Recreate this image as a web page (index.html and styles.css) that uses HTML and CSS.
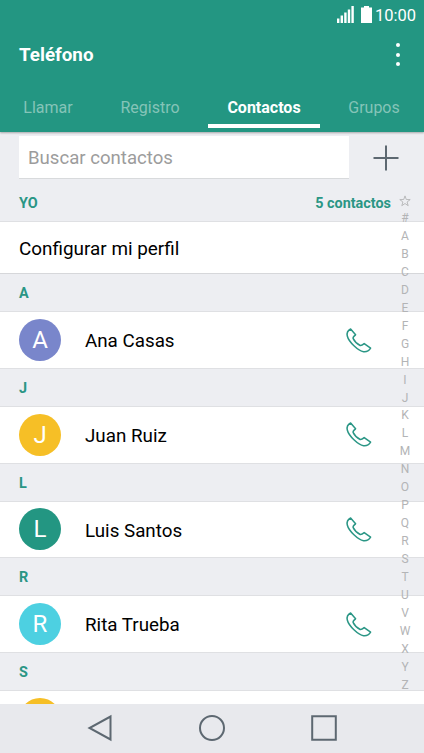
FILE: index.html
```html
<!DOCTYPE html>
<html lang="es">
<head>
  <meta charset="UTF-8">
  <meta name="viewport" content="width=device-width, initial-scale=1.0">
  <title>Teléfono</title>
  <link rel="stylesheet" href="styles.css">
</head>
<body>
  <!-- Shared icons -->
  <svg class="sprite">
    <symbol id="icon-phone" viewBox="0 0 28 28">
      <path d="M5.6 2 L10.6 7.8 Q7.4 10 8.2 11.6 C9.4 14.2 12.4 17 15.2 18.5 Q16.6 18.8 19.2 16.6 L25.6 21.2 C24 23.8 21.6 25 18.6 24.7 C13.2 24 3.7 14.8 2.3 9 C1.6 6 3 3.4 5.6 2 Z"/>
    </symbol>
  </svg>

  <!-- Header -->
  <header class="header">
    <div class="status-bar">
      <svg class="signal" viewBox="0 0 17 17" width="17" height="17">
        <path d="M0 12.5h2.4V17H0zM3.6 9.5H6V17H3.6zM7.2 6.5h2.4V17H7.2zM10.8 3.5h2.4V17h-2.4zM14.4 0h2.4v17h-2.4z"/>
      </svg>
      <svg class="battery" viewBox="0 0 11 17" width="11" height="17">
        <path d="M3 0h5v1.5h3V17H0V1.5h3z"/>
      </svg>
      <span>10:00</span>
    </div>
    <div class="title-bar">
      <h1>Teléfono</h1>
      <div class="more"><i></i><i></i><i></i></div>
    </div>
    <nav class="tabs">
      <a class="tab">Llamar</a>
      <a class="tab">Registro</a>
      <a class="tab active">Contactos</a>
      <a class="tab">Grupos</a>
    </nav>
  </header>

  <!-- Contact list -->
  <main class="content">
    <div class="search">
      <input class="search-input" type="text" placeholder="Buscar contactos">
      <svg class="add" viewBox="0 0 26 26" width="26" height="26">
        <path d="M13 0.5v25M0.5 13h25"/>
      </svg>
    </div>

    <div class="section me"><span>YO</span><span>5 contactos</span></div>
    <div class="profile">Configurar mi perfil</div>

    <div class="section">A</div>
    <div class="contact">
      <span class="avatar purple">A</span>
      <span class="name">Ana Casas</span>
      <svg class="phone"><use href="#icon-phone"/></svg>
    </div>

    <div class="section">J</div>
    <div class="contact">
      <span class="avatar yellow">J</span>
      <span class="name">Juan Ruiz</span>
      <svg class="phone"><use href="#icon-phone"/></svg>
    </div>

    <div class="section">L</div>
    <div class="contact">
      <span class="avatar green">L</span>
      <span class="name">Luis Santos</span>
      <svg class="phone"><use href="#icon-phone"/></svg>
    </div>

    <div class="section">R</div>
    <div class="contact">
      <span class="avatar cyan">R</span>
      <span class="name">Rita Trueba</span>
      <svg class="phone"><use href="#icon-phone"/></svg>
    </div>

    <div class="section">S</div>
    <div class="contact">
      <span class="avatar yellow"></span>
    </div>

    <!-- Alphabet index -->
    <div class="index">
      <svg viewBox="0 0 12 12" width="12" height="12">
        <path d="M6 .9l1.3 3.6 3.9.1-3.1 2.4 1.1 3.7L6 8.5l-3.2 2.2 1.1-3.7L.8 4.6l3.9-.1z"/>
      </svg>
      <span>#</span><span>A</span><span>B</span><span>C</span><span>D</span><span>E</span><span>F</span><span>G</span><span>H</span><span>I</span><span>J</span><span>K</span><span>L</span><span>M</span><span>N</span><span>O</span><span>P</span><span>Q</span><span>R</span><span>S</span><span>T</span><span>U</span><span>V</span><span>W</span><span>X</span><span>Y</span><span>Z</span>
    </div>
  </main>

  <!-- Navigation bar -->
  <footer class="nav-bar">
    <svg viewBox="0 0 28 28" width="28" height="28"><path d="M24.5 2.5v23L3.5 14z"/></svg>
    <svg viewBox="0 0 28 28" width="28" height="28"><circle cx="14" cy="14" r="12"/></svg>
    <svg viewBox="0 0 28 28" width="28" height="28"><path d="M2.2 2.2h23.6v23.6H2.2z"/></svg>
  </footer>
</body>
</html>
```
FILE: styles.css
```css
* {
  box-sizing: border-box;
}

body {
  margin: 0;
  height: 753px;
  display: flex;
  flex-direction: column;
  overflow: hidden;
  font-family: Roboto, sans-serif;
  color: #000;
  background: #edeef2;
}

.sprite {
  display: none;
}

/* Header */
.header {
  flex: none;
  height: 132px;
  background: #239682;
  color: #fff;
  box-shadow: 0 1px 2px rgba(0, 0, 0, 0.3);
  position: relative;
  z-index: 1;
}

.status-bar {
  display: flex;
  justify-content: flex-end;
  align-items: center;
  height: 29px;
  padding-right: 8px;
  font-size: 16.5px;
}

.status-bar span {
  padding-top: 1px;
}

.status-bar svg {
  fill: #fff;
}

.signal {
  margin-right: 7px;
}

.battery {
  margin-right: 3px;
}

.title-bar {
  display: flex;
  justify-content: space-between;
  align-items: center;
  height: 51px;
  padding: 0 24px 0 19px;
}

h1 {
  margin: 0;
  padding-top: 1px;
  font-size: 18.8px;
  font-weight: bold;
}

.more {
  display: flex;
  flex-direction: column;
  gap: 5.4px;
}

.more i {
  width: 4px;
  height: 4px;
  border-radius: 50%;
  background: #fff;
}

/* Tabs */
.tabs {
  display: flex;
  height: 52px;
}

.tab {
  flex: none;
  width: 112px;
  height: 48px;
  line-height: 55px;
  text-align: center;
  font-size: 16px;
  color: #85c4b8;
}

.tab:first-child {
  width: 96px;
}

.tab:nth-child(2) {
  padding-right: 4px;
}

.tab:last-child {
  width: 104px;
  padding-left: 4px;
}

.tab.active {
  color: #fff;
  font-weight: bold;
  border-bottom: 4px solid #fff;
}

/* Search */
.content {
  flex: 1;
  min-height: 0;
  overflow: hidden;
  position: relative;
}

.search {
  display: flex;
  align-items: center;
  justify-content: space-between;
  height: 52.3px;
  padding: 0 25px 0.5px 19px;
}

.search-input {
  width: 330px;
  height: 43px;
  padding: 1px 9px 0;
  border: none;
  border-bottom: 1px solid #d8dadc;
  background: #fff;
  font: 18.6px Roboto, sans-serif;
}

.search-input::placeholder {
  color: #9c9c9c;
}

.add {
  stroke: #5d6871;
  stroke-width: 2;
}

/* Rows */
.section {
  height: 37.9px;
  padding: 0 19px;
  line-height: 39px;
  font-size: 14.4px;
  font-weight: bold;
  color: #2a9685;
  border-bottom: 1px solid #dfe0e3;
}

.section.me {
  display: flex;
  justify-content: space-between;
  padding-right: 33px;
}

.profile {
  height: 52px;
  padding-left: 19px;
  line-height: 54px;
  font-size: 18.9px;
  background: #fff;
  border-bottom: 1px solid #d6d7da;
}

.contact {
  display: flex;
  align-items: center;
  height: 56.85px;
  padding: 0 51px 0 19px;
  background: #fff;
  border-bottom: 1px solid #dfe0e3;
}

.avatar {
  width: 42px;
  height: 42px;
  margin-right: 24px;
  border-radius: 50%;
  line-height: 43px;
  text-align: center;
  font-size: 24px;
  color: #fff;
}

.purple { background: #7986cb; }
.yellow { background: #f6bf26; }
.green { background: #239682; }
.cyan { background: #4dd0e1; }

.name {
  flex: 1;
  padding-top: 2.4px;
  font-size: 18.8px;
}

.phone {
  width: 28px;
  height: 28px;
  margin-top: 1px;
  fill: none;
  stroke: #2a9685;
  stroke-width: 1.5;
  stroke-linejoin: round;
}

/* Alphabet index over the list */
.index {
  position: absolute;
  top: 60px;
  right: 9px;
  width: 20px;
  display: flex;
  flex-direction: column;
  align-items: center;
  font-size: 12px;
  line-height: 17.96px;
  color: #b3b4b6;
}

.index svg {
  margin: 3px 0;
  fill: none;
  stroke: #b3b4b6;
  stroke-width: 0.9;
}

/* Navigation bar */
.nav-bar {
  flex: none;
  display: flex;
  justify-content: center;
  align-items: center;
  gap: 84px;
  height: 49.5px;
  background: #e8e9ed;
}

.nav-bar svg {
  fill: none;
  stroke: #5d6871;
  stroke-width: 2;
}
```
